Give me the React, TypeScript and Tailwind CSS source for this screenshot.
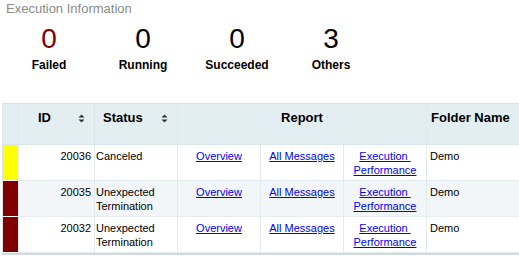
import React from 'react';

type Row = { id: number; status: string; color: string };

const rows: Row[] = [
  { id: 20036, status: 'Canceled', color: '#ffff00' },
  { id: 20035, status: 'Unexpected Termination', color: '#800000' },
  { id: 20032, status: 'Unexpected Termination', color: '#800000' },
];

const stats = [
  { value: 0, label: 'Failed', color: 'text-[#800000]' },
  { value: 0, label: 'Running', color: 'text-black' },
  { value: 0, label: 'Succeeded', color: 'text-black' },
  { value: 3, label: 'Others', color: 'text-black' },
];

const SortIcon = () => (
  <svg width="7" height="11" viewBox="0 0 7 11" className="ml-auto mr-[9px] mt-[3px] shrink-0">
    <path d="M0.5 4.5 L3.5 1.5 L6.5 4.5 Z" fill="#333333" />
    <path d="M0.5 6.5 L3.5 9.5 L6.5 6.5 Z" fill="#333333" />
  </svg>
);

const Link: React.FC<{ children: React.ReactNode }> = ({ children }) => (
  <a href="#" className="text-[#0000ff] underline underline-offset-1">{children}</a>
);

const App: React.FC = () => {
  return (
    <div className="w-[519px] h-[261px] overflow-hidden bg-white font-['Liberation_Sans',Arial,sans-serif] text-black">
      <div className="pl-[6px] pt-[1px] text-[13px] leading-[16px] text-[#8a8a8a]">Execution Information</div>

      {/* Summary counters */}
      <div className="flex ml-[2px] mt-[6px]">
        {stats.map((s) => (
          <div key={s.label} className="w-[94px] flex flex-col items-center">
            <div className={`text-[28px] leading-[32px] ${s.color}`}>{s.value}</div>
            <div className="mt-[3px] text-[12px] leading-[14px] font-bold">{s.label}</div>
          </div>
        ))}
      </div>

      {/* Executions grid */}
      <div className="ml-[2px] mt-[31px] w-[600px] border-t border-l border-b-2 border-t-[#d5e1e7] border-l-[#dfe6ea] border-b-[#d3d9dc] text-[11px] leading-[14px]">
        <div className="grid grid-cols-[16px_76px_83px_249px_1fr] h-[41px] bg-[#e3eef2] border-b border-[#dbe6eb] text-[13px] leading-[16px] font-bold">
          <div className="border-r border-[#dce7ec]" />
          <div className="flex items-start pl-[19px] pt-[6px] border-r border-[#d9e5ea]">
            <span>ID</span>
            <SortIcon />
          </div>
          <div className="flex items-start pl-[8px] pt-[6px] border-r border-[#dfe9ee]">
            <span>Status</span>
            <SortIcon />
          </div>
          <div className="pt-[6px] text-center border-r border-[#dfe9ee]">Report</div>
          <div className="pt-[6px] pl-[4px]">Folder Name</div>
        </div>

        {rows.map((r, i) => (
          <div
            key={r.id}
            className={`grid grid-cols-[16px_76px_83px_83px_83px_83px_1fr] h-[36px] ${i === 1 ? 'bg-[#f3f6f8]' : 'bg-white'}`}
          >
            <div className="border-r border-b border-r-[#e6edf0] border-b-white" style={{ backgroundColor: r.color }} />
            <div className="pt-[4px] pr-[3px] text-right border-r border-b border-[#e3ebef]">{r.id}</div>
            <div className="pt-[4px] pl-[1px] border-r border-b border-[#e3ebef]">{r.status}</div>
            <div className="pt-[4px] text-center border-r border-b border-[#e3ebef]">
              <Link>Overview</Link>
            </div>
            <div className="pt-[4px] text-center border-r border-b border-[#e3ebef]">
              <Link>All Messages</Link>
            </div>
            <div className="pt-[4px] text-center border-r border-b border-[#e3ebef]">
              <Link>{'Execution\u00a0 Performance'}</Link>
            </div>
            <div className="pt-[4px] pl-[3px] border-b border-[#e3ebef]">Demo</div>
          </div>
        ))}
      </div>
    </div>
  );
};

export default App;
